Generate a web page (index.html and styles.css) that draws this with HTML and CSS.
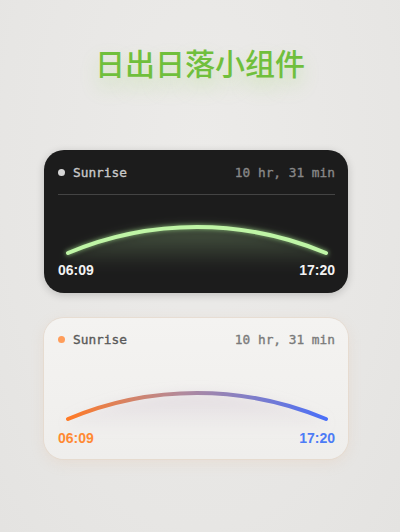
FILE: index.html
```html
<!DOCTYPE html>
<html lang="zh">
<head>
<meta charset="utf-8">
<link rel="stylesheet" href="styles.css">
</head>
<body>
<main class="page">
  <h1 class="title">日出日落小组件</h1>
  <div class="cards">
    <section class="card card-dark">
      <div class="head">
        <span class="label"><span class="dot"></span>Sunrise</span>
        <span class="dur">10 hr, 31 min</span>
      </div>
      <div class="rule"></div>
      <svg class="arc" viewBox="0 0 277 64" width="277" height="64">
        <defs>
          <linearGradient id="gfill" x1="0" y1="0" x2="0" y2="1">
            <stop offset="0" stop-color="#9bc48a" stop-opacity="0.35"/>
            <stop offset="1" stop-color="#9bc48a" stop-opacity="0"/>
          </linearGradient>
          <filter id="blur1" x="-20%" y="-50%" width="140%" height="200%"><feGaussianBlur stdDeviation="6"/></filter>
          <filter id="glow1" x="-10%" y="-50%" width="120%" height="200%"><feGaussianBlur stdDeviation="2"/></filter>
        </defs>
        <path d="M10 57 A333 333 0 0 1 268 57 L268 72 L10 72 Z" fill="url(#gfill)" filter="url(#blur1)"/>
        <path d="M10 57 A333 333 0 0 1 268 57" fill="none" stroke="#a8e890" stroke-width="5" stroke-linecap="round" filter="url(#glow1)" opacity="0.6"/>
        <path d="M10 57 A333 333 0 0 1 268 57" fill="none" stroke="#bff5a6" stroke-width="4" stroke-linecap="round"/>
      </svg>
      <div class="times">
        <span>06:09</span>
        <span>17:20</span>
      </div>
    </section>
    <section class="card card-light">
      <div class="head">
        <span class="label"><span class="dot"></span>Sunrise</span>
        <span class="dur">10 hr, 31 min</span>
      </div>
      <div class="rule"></div>
      <svg class="arc" viewBox="0 0 277 64" width="277" height="64">
        <defs>
          <linearGradient id="lstroke" x1="10" y1="0" x2="268" y2="0" gradientUnits="userSpaceOnUse">
            <stop offset="0" stop-color="#ff7a26"/>
            <stop offset="0.45" stop-color="#b08a9e"/>
            <stop offset="1" stop-color="#4a6ff8"/>
          </linearGradient>
          <linearGradient id="lfill" x1="0" y1="0" x2="0" y2="1">
            <stop offset="0" stop-color="#c8b8c8" stop-opacity="0.35"/>
            <stop offset="1" stop-color="#c8b8c8" stop-opacity="0"/>
          </linearGradient>
          <filter id="blur2" x="-20%" y="-50%" width="140%" height="200%"><feGaussianBlur stdDeviation="6"/></filter>
        </defs>
        <path d="M10 57 A333 333 0 0 1 268 57 L268 70 L10 70 Z" fill="url(#lfill)" filter="url(#blur2)"/>
        <path d="M10 57 A333 333 0 0 1 268 57" fill="none" stroke="url(#lstroke)" stroke-width="4" stroke-linecap="round"/>
      </svg>
      <div class="times">
        <span class="t-orange">06:09</span>
        <span class="t-blue">17:20</span>
      </div>
    </section>
  </div>
</main>
</body>
</html>
```

FILE: styles.css
```css
* { box-sizing: border-box; }
html, body { margin: 0; padding: 0; }
body {
  width: 400px;
  height: 532px;
  overflow: hidden;
  background: radial-gradient(ellipse at 50% 30%, #ecebe9 0%, #e7e6e4 70%, #e4e3e1 100%);
  font-family: "Liberation Sans", Arial, sans-serif;
}
.page {
  display: flex;
  flex-direction: column;
}
.title {
  margin: 42px 0 0 0;
  height: 40px;
  line-height: 40px;
  text-align: center;
  font-family: "Noto Sans CJK SC", "Noto Sans", sans-serif;
  font-weight: 500;
  font-size: 30px;
  color: #70bf3c;
  text-shadow: 0 10px 18px rgba(150, 215, 90, 0.35);
}
.cards {
  display: flex;
  flex-direction: column;
  gap: 25px;
  padding-left: 44px;
  margin-top: 68px;
}
.card {
  width: 304px;
  height: 143px;
  border-radius: 20px;
  padding: 14px 13px 15px 14px;
  display: flex;
  flex-direction: column;
}
.card-dark {
  background: #1c1c1c;
  box-shadow: 0 2px 8px rgba(0, 0, 0, 0.18);
}
.card-light {
  height: 141px;
  background: linear-gradient(180deg, #f4f3f1 0%, #efeeec 100%);
  box-shadow: 0 0 0 1px rgba(230, 215, 200, 0.6), 0 4px 14px rgba(230, 180, 140, 0.18);
}
.head {
  height: 16px;
  display: flex;
  justify-content: space-between;
  align-items: center;
  font-family: "DejaVu Sans Mono", "Liberation Mono", monospace;
  font-size: 12.8px;
  font-weight: 400;
  -webkit-text-stroke: 0.35px currentColor;
}
.label {
  display: flex;
  align-items: center;
  gap: 8px;
}
.dot {
  width: 7px;
  height: 7px;
  border-radius: 50%;
}
.card-dark .dot { background: #d6d6d6; }
.card-dark .label { color: #c9c9c9; }
.card-dark .dur { color: #888888; }
.card-light .dot { background: #ff9d5a; }
.card-light .label { color: #595959; }
.card-light .dur { color: #7a7a7a; }
.rule {
  height: 1px;
  margin-top: 14px;
}
.card-dark .rule { background: #444444; }
.card-light .rule { background: #dedcda; }
.arc {
  display: block;
  overflow: visible;
  margin-top: 1px;
}
.times {
  height: 16px;
  margin-top: 2px;
  display: flex;
  justify-content: space-between;
  align-items: center;
  font-size: 14px;
  font-weight: 700;
}
.card-dark .times { color: #f2f2f2; }
.card-light .times { margin-top: 4px; }
.t-orange { color: #ff8a34; }
.t-blue { color: #4d7cf6; }
```
